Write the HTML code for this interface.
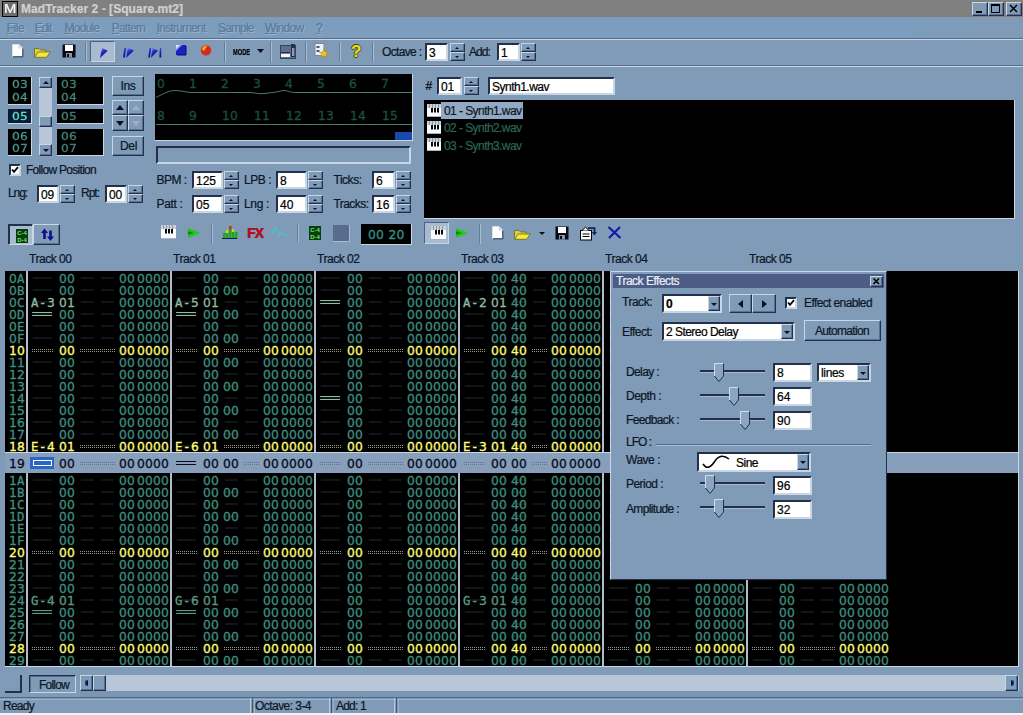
<!DOCTYPE html>
<html lang="en"><head><meta charset="utf-8"><title>MadTracker 2 - [Square.mt2]</title>
<style>
html,body{margin:0;padding:0}
body{width:1023px;height:715px;position:relative;overflow:hidden;background:#809bb7;font-family:"Liberation Sans",sans-serif}
div,svg,i,b,em,span{position:absolute;box-sizing:border-box}
svg{overflow:visible}
.t{white-space:nowrap;line-height:16px;height:16px;-webkit-text-stroke:.22px}
.t u{text-decoration:underline;text-underline-offset:1px}
.l{height:12px;line-height:12px;white-space:pre;width:1023px}
.l b,.l em{-webkit-text-stroke:.3px;font-weight:normal;font-style:normal;top:1px;height:12px;line-height:12px;font-size:12.3px}
.l b{font-family:"DejaVu Sans",sans-serif;letter-spacing:.18px}
.l.sm b{transform:scaleY(.85);transform-origin:0 55%}
.l em{font-family:"DejaVu Sans Mono",monospace;letter-spacing:.6px}
.rz{border:1px solid;border-color:#c9d6e4 #22304c #22304c #c9d6e4;background:#809bb7;box-shadow:inset -1px -1px 0 #5a7090}
.sk{border:1px solid;border-color:#22304c #c9d6e4 #c9d6e4 #22304c}
.pr{border:1px solid;border-color:#22304c #c9d6e4 #c9d6e4 #22304c;box-shadow:inset 1px 1px 0 #22304c;background:#a9bccf}
.p1{box-shadow:none;border-color:#4c6283 #c9d6e4 #c9d6e4 #4c6283}
.trk{background:#b7c7d7}
.in{background:#fff;border:2px solid;border-color:#22304c #c9d6e4 #c9d6e4 #22304c}
i.au,i.ad,i.al,i.ar{width:0;height:0;border:3px solid transparent;left:50%;top:50%}
i.au{border-width:0 2.5px 2.5px;border-bottom-color:#0a1020;margin:-1px 0 0 -2.5px}
i.ad{border-width:2.5px 2.5px 0;border-top-color:#0a1020;margin:-1px 0 0 -2.5px}
i.au.g{border-width:0 3px 3px;margin:-2px 0 0 -3px}
i.ad.g{border-width:3px 3px 0;margin:-1px 0 0 -3px}
i.au.b{border-width:0 4px 5px 4px;margin:-3px 0 0 -4px}
i.ad.b{border-width:5px 4px 0 4px;margin:-2px 0 0 -4px}
i.al{border:4px solid transparent;border-left:0;border-right:5px solid #0a1020;margin:-4px 0 0 -3px}
i.ar{border:4px solid transparent;border-right:0;border-left:5px solid #0a1020;margin:-4px 0 0 -2px}
i.al.s{border-width:3px 3px 3px 0;margin:-3px 0 0 -2px}
i.ar.s{border-width:3px 0 3px 3px;margin:-3px 0 0 -1px}
.dm{background:repeating-linear-gradient(180deg,transparent 0 5px,#111615 5px 7px,transparent 7px 12px)}
.pat{left:0;top:0;width:1023px;height:0}
.r{left:0;color:#3f8f80;width:889px;overflow:hidden}
.r.y{color:#ffff78}
.r.c{color:#060a1c}
.r i{top:4px;height:5px;background:repeating-linear-gradient(90deg,#000 0 1px,transparent 1px 2px),repeating-linear-gradient(0deg,#000 0 1px,#9a9a82 1px 2px)}
.r.c i{background-image:repeating-linear-gradient(90deg,#879fbb 0 1px,transparent 1px 2px),repeating-linear-gradient(0deg,#879fbb 0 1px,#5c7592 1px 2px)}
.q{top:4px;width:20px;height:4px;border-top:1px solid #8fbca0;border-bottom:1px solid #8fbca0}
.r.y .q{border-color:#ffff78}
.r.c .q{border-color:#060a1c}
.s{top:0;width:24px;height:12px;background:#2a66c4}
</style></head>
<body>
<div style="left:0px;top:0px;width:1023px;height:17px;background:#808080"></div>
<div style="left:2px;top:1px;width:16px;height:16px;background:#6e6e6e;border:1px solid #000"></div>
<div class="t" style="left:4px;top:1.4px;font-size:12.5px;color:#fff;transform:scaleX(1.18);transform-origin:0 50%;">M</div>
<div class="t" style="left:21px;top:1.0px;font-size:12px;color:#d0d0d0;font-weight:bold;letter-spacing:0.05px;">MadTracker 2 - [Square.mt2]</div>
<div class="rz" style="left:972px;top:2px;width:16px;height:14px;"></div>
<div class="rz" style="left:988px;top:2px;width:16px;height:14px;"></div>
<div class="rz" style="left:1006px;top:2px;width:16px;height:14px;"></div>
<svg style="left:972px;top:2px" width="16" height="14" viewBox="0 0 16 14"><rect x="4" y="9" width="6" height="2" fill="#000"/></svg>
<svg style="left:988px;top:2px" width="16" height="14" viewBox="0 0 16 14"><rect x="3.5" y="2.5" width="8" height="8" fill="none" stroke="#000"/><rect x="3" y="2" width="9" height="2" fill="#000"/></svg>
<svg style="left:1006px;top:2px" width="16" height="14" viewBox="0 0 16 14"><path d="M4 3L11 10M11 3L4 10" stroke="#000" stroke-width="1.5"/></svg>
<div style="left:0px;top:18px;width:1023px;height:20px;background:linear-gradient(90deg,#7c9dbe 0,#7c9dbe 88%,#809bb7 97%)"></div>
<div class="t" style="left:6.8px;top:20.2px;font-size:12px;color:#5d7c9e;letter-spacing:-0.53px;text-shadow:1px 1px 0 #9db3ca;"><u>F</u>ile</div>
<div class="t" style="left:34.7px;top:20.2px;font-size:12px;color:#5d7c9e;letter-spacing:-1.02px;text-shadow:1px 1px 0 #9db3ca;"><u>E</u>dit</div>
<div class="t" style="left:64.5px;top:20.2px;font-size:12px;color:#5d7c9e;letter-spacing:-0.76px;text-shadow:1px 1px 0 #9db3ca;"><u>M</u>odule</div>
<div class="t" style="left:111.8px;top:20.2px;font-size:12px;color:#5d7c9e;letter-spacing:-0.78px;text-shadow:1px 1px 0 #9db3ca;"><u>P</u>attern</div>
<div class="t" style="left:156.8px;top:20.2px;font-size:12px;color:#5d7c9e;letter-spacing:-0.80px;text-shadow:1px 1px 0 #9db3ca;"><u>I</u>nstrument</div>
<div class="t" style="left:218px;top:20.2px;font-size:12px;color:#5d7c9e;letter-spacing:-0.86px;text-shadow:1px 1px 0 #9db3ca;"><u>S</u>ample</div>
<div class="t" style="left:265px;top:20.2px;font-size:12px;color:#5d7c9e;letter-spacing:-0.70px;text-shadow:1px 1px 0 #9db3ca;"><u>W</u>indow</div>
<div class="t" style="left:316px;top:20.2px;font-size:12px;color:#5d7c9e;letter-spacing:-1.67px;text-shadow:1px 1px 0 #9db3ca;"><u>?</u></div>
<div style="left:0px;top:38px;width:1023px;height:1px;background:#566c8c"></div>
<div style="left:0px;top:39px;width:1023px;height:1px;background:#c9d6e4"></div>
<div style="left:0px;top:65px;width:1023px;height:1px;background:#566c8c"></div>
<div style="left:0px;top:66px;width:1023px;height:1px;background:#c9d6e4"></div>
<svg style="left:12px;top:44px" width="11" height="13" viewBox="0 0 11 13"><path d="M.5 .5H7L10.5 4V12.5H.5Z" fill="#fff" stroke="#e8eef5" stroke-width=".6"/><path d="M10.8 4.5V12.8H1" fill="none" stroke="#22304c" stroke-width="1"/><path d="M7 .5V4H10.5" fill="#dfe7ef" stroke="#b8c4d2" stroke-width=".6"/></svg>
<svg style="left:34px;top:47px" width="17" height="11" viewBox="0 0 17 11"><path d="M.5 10V1.5H5L6.5 3H12V5" fill="#d8cf4a" stroke="#6f6a10" stroke-width=".8"/><path d="M.8 10.3L4 5H16.3L12.5 10.3Z" fill="#f2ea3c" stroke="#6f6a10" stroke-width=".8"/></svg>
<svg style="left:62px;top:44px" width="14" height="14" viewBox="0 0 14 14"><rect x=".5" y=".5" width="13" height="13" fill="#0a0a14"/><rect x="3" y="1" width="8" height="6" fill="#fff"/><rect x="4" y="9" width="6" height="4.5" fill="#8b96a6"/><rect x="5" y="10" width="2" height="3" fill="#0a0a14"/></svg>
<div style="left:85px;top:42px;width:1px;height:20px;background:#657c9a"></div>
<div style="left:86px;top:42px;width:1px;height:20px;background:#a9bcd0"></div>
<div class="pr p1" style="left:90px;top:41px;width:25px;height:21px;"></div>
<svg style="left:0;top:0" width="0" height="0"><defs><linearGradient id="pg" x1="0" y1="0" x2=".6" y2="1"><stop offset="0" stop-color="#8f9cf0"/><stop offset=".45" stop-color="#2428c8"/><stop offset="1" stop-color="#0a0c70"/></linearGradient></defs></svg>
<svg style="left:99px;top:47px" width="10" height="12" viewBox="0 0 10 12"><path d="M3 1L8.8 3.8L1 11Z" fill="url(#pg)"/></svg>
<svg style="left:122px;top:47px" width="13" height="12" viewBox="0 0 13 12"><path d="M2.2 1H4L2.8 10.5H1Z" fill="url(#pg)"/><path d="M5.6 1L12 3.6L4.2 10.8Z" fill="url(#pg)"/></svg>
<svg style="left:147px;top:47px" width="15" height="12" viewBox="0 0 15 12"><path d="M2.4 1H4.2L3 10.5H1.2Z" fill="url(#pg)"/><path d="M5.4 1L11 3.8L4 10.8Z" fill="url(#pg)"/><path d="M12.4 1H14.2V10.5H12.4Z" fill="url(#pg)"/></svg>
<svg style="left:176px;top:45px" width="10" height="10" viewBox="0 0 10 10"><rect width="10" height="10" fill="#1a20c4"/><path d="M0 0H6L0 6Z" fill="#93a6ee"/><path d="M0 0H3.5L0 3.5Z" fill="#dfe7fb"/><path d="M10 1V10H1" fill="none" stroke="#0b0f6c" stroke-width="1"/></svg>
<svg style="left:200px;top:44px" width="12" height="12" viewBox="0 0 12 12"><circle cx="6" cy="6.2" r="5.2" fill="#d8281c"/><path d="M1.8 5.5A4.2 4.2 0 0 1 7.5 1.8L4 7Z" fill="#f2a21c"/></svg>
<div style="left:224px;top:42px;width:1px;height:20px;background:#657c9a"></div>
<div style="left:225px;top:42px;width:1px;height:20px;background:#a9bcd0"></div>
<div class="t" style="left:233px;top:43.8px;font-size:8.6px;color:#000;font-weight:bold;transform:scaleX(.66);transform-origin:0 50%;">MODE</div>
<svg style="left:257px;top:49px" width="7" height="4" viewBox="0 0 7 4"><path d="M0 0H7L3.5 4Z" fill="#0a1020"/></svg>
<div style="left:270px;top:42px;width:1px;height:20px;background:#657c9a"></div>
<div style="left:271px;top:42px;width:1px;height:20px;background:#a9bcd0"></div>
<svg style="left:280px;top:43px" width="16" height="16" viewBox="0 0 16 16"><rect x=".5" y="2.5" width="15" height="13" fill="#5d6f8b" stroke="#36455f"/><rect x="1" y="9" width="9" height="5" fill="#f4f6fa"/><rect x="1" y="9" width="9" height="1.6" fill="#22304c"/><rect x="11" y="1" width="4" height="13" fill="#22304c"/><rect x="12" y="5" width="2.4" height="8" fill="#8b9bb3"/></svg>
<div style="left:305px;top:42px;width:1px;height:20px;background:#657c9a"></div>
<div style="left:306px;top:42px;width:1px;height:20px;background:#a9bcd0"></div>
<svg style="left:314px;top:43px" width="15" height="15" viewBox="0 0 15 15"><rect x="1" y=".5" width="9" height="12" fill="#eef1f5" stroke="#7b8797"/><rect x="2.5" y="3" width="3" height="2" fill="#4a5a74"/><rect x="2.5" y="7" width="3" height="2" fill="#4a5a74"/><path d="M10 6L11.3 9L14.5 9.4L12 11.3L12.8 14.5L10 12.8L7.2 14.5L8 11.3L5.5 9.4L8.7 9Z" fill="#f0c81c" stroke="#a07c0a" stroke-width=".5"/></svg>
<div style="left:339px;top:42px;width:1px;height:20px;background:#657c9a"></div>
<div style="left:340px;top:42px;width:1px;height:20px;background:#a9bcd0"></div>
<div class="t" style="left:351px;top:43.8px;font-size:17px;color:#e8e020;font-weight:bold;letter-spacing:-0.38px;text-shadow:1px 0 0 #3a3a10,-1px 0 0 #3a3a10,0 1px 0 #3a3a10,0 -1px 0 #3a3a10;">?</div>
<div style="left:372px;top:42px;width:1px;height:20px;background:#657c9a"></div>
<div style="left:373px;top:42px;width:1px;height:20px;background:#a9bcd0"></div>
<div class="t" style="left:382px;top:43.7px;font-size:12px;color:#0c1626;letter-spacing:-0.65px;">Octave :</div>
<div class="in" style="left:425px;top:43px;width:23px;height:18px;"></div>
<div class="t" style="left:429px;top:44.7px;font-size:12px;color:#000;">3</div>
<div class="rz" style="left:450px;top:43px;width:15px;height:9px;"><i class="au"></i></div>
<div class="rz" style="left:450px;top:52px;width:15px;height:9px;"><i class="ad"></i></div>
<div class="t" style="left:469px;top:43.7px;font-size:12px;color:#0c1626;letter-spacing:-0.92px;">Add:</div>
<div class="in" style="left:497px;top:43px;width:23px;height:18px;"></div>
<div class="t" style="left:501px;top:44.7px;font-size:12px;color:#000;">1</div>
<div class="rz" style="left:521px;top:43px;width:15px;height:9px;"><i class="au"></i></div>
<div class="rz" style="left:521px;top:52px;width:15px;height:9px;"><i class="ad"></i></div>
<div style="left:8px;top:77px;width:24px;height:28px;background:#000;border-bottom:1px solid #c9d6e4;border-right:1px solid #c9d6e4"></div>
<div style="left:8px;top:109px;width:24px;height:15px;background:#000;border-bottom:1px solid #c9d6e4;border-right:1px solid #c9d6e4"></div>
<div style="left:8px;top:129px;width:24px;height:27px;background:#000;border-bottom:1px solid #c9d6e4;border-right:1px solid #c9d6e4"></div>
<div style="left:57px;top:77px;width:47px;height:28px;background:#000;border-bottom:1px solid #c9d6e4;border-right:1px solid #c9d6e4"></div>
<div style="left:57px;top:109px;width:47px;height:15px;background:#000;border-bottom:1px solid #c9d6e4;border-right:1px solid #c9d6e4"></div>
<div style="left:57px;top:129px;width:47px;height:27px;background:#000;border-bottom:1px solid #c9d6e4;border-right:1px solid #c9d6e4"></div>
<div style="left:8px;top:109px;width:23px;height:14px;background:#0a1c34"></div>
<div class="l sm" style="left:0;top:77.5px;color:#4a9484;"><b style="left:12px;">03</b></div>
<div class="l sm" style="left:0;top:90.5px;color:#4a9484;"><b style="left:12px;">04</b></div>
<div class="l sm" style="left:0;top:109.5px;color:#5ce0cc;"><b style="left:12px;">05</b></div>
<div class="l sm" style="left:0;top:129.5px;color:#4a9484;"><b style="left:12px;">06</b></div>
<div class="l sm" style="left:0;top:141.5px;color:#4a9484;"><b style="left:12px;">07</b></div>
<div class="l sm" style="left:0;top:77.5px;color:#3f8474;"><b style="left:61px;">03</b></div>
<div class="l sm" style="left:0;top:90.5px;color:#3f8474;"><b style="left:61px;">04</b></div>
<div class="l sm" style="left:0;top:109.5px;color:#3f8474;"><b style="left:61px;">05</b></div>
<div class="l sm" style="left:0;top:129.5px;color:#3f8474;"><b style="left:61px;">06</b></div>
<div class="l sm" style="left:0;top:141.5px;color:#3f8474;"><b style="left:61px;">07</b></div>
<div class="trk" style="left:39px;top:77px;width:13px;height:79px;"></div>
<div class="rz" style="left:39px;top:77px;width:13px;height:11px;"><i class="au g"></i></div>
<div class="rz" style="left:39px;top:116px;width:13px;height:11px;"></div>
<div class="rz" style="left:39px;top:144px;width:13px;height:12px;"><i class="ad g"></i></div>
<div class="rz" style="left:112px;top:76px;width:32px;height:20px;"></div>
<div class="t" style="left:120.5px;top:78.2px;font-size:12px;color:#0c1626;letter-spacing:-0.34px;">Ins</div>
<div class="rz" style="left:112px;top:136px;width:32px;height:20px;"></div>
<div class="t" style="left:120px;top:138.2px;font-size:12px;color:#0c1626;letter-spacing:-0.34px;">Del</div>
<div class="rz" style="left:112px;top:100px;width:16px;height:15px;"><i class="au b"></i></div>
<div class="rz" style="left:128px;top:100px;width:16px;height:15px;"><i class="au b" style="border-bottom-color:#9fb3c8"></i></div>
<div class="rz" style="left:112px;top:115px;width:16px;height:16px;"><i class="ad b"></i></div>
<div class="rz" style="left:128px;top:115px;width:16px;height:16px;"><i class="ad b" style="border-top-color:#9fb3c8"></i></div>
<div class="in" style="left:8.5px;top:163.5px;width:12px;height:12px;"></div>
<svg style="left:10.5px;top:165.5px" width="8" height="8" viewBox="0 0 8 8"><path d="M1 3.5L3 5.8L7 1.2" fill="none" stroke="#000" stroke-width="1.8"/></svg>
<div class="t" style="left:26px;top:162.2px;font-size:12px;color:#0c1626;letter-spacing:-0.71px;">Follow Position</div>
<div class="t" style="left:8px;top:185.2px;font-size:12px;color:#0c1626;letter-spacing:-1.09px;">Lng:</div>
<div class="in" style="left:37px;top:185px;width:22px;height:18px;"></div>
<div class="t" style="left:41px;top:186.7px;font-size:12px;color:#000;letter-spacing:-0.17px;">09</div>
<div class="rz" style="left:60px;top:185px;width:15px;height:9px;"><i class="au"></i></div>
<div class="rz" style="left:60px;top:194px;width:15px;height:9px;"><i class="ad"></i></div>
<div class="t" style="left:81px;top:185.2px;font-size:12px;color:#0c1626;letter-spacing:-1.00px;">Rpt:</div>
<div class="in" style="left:105px;top:185px;width:22px;height:18px;"></div>
<div class="t" style="left:109px;top:186.7px;font-size:12px;color:#000;letter-spacing:-0.17px;">00</div>
<div class="rz" style="left:128px;top:185px;width:15px;height:9px;"><i class="au"></i></div>
<div class="rz" style="left:128px;top:194px;width:15px;height:9px;"><i class="ad"></i></div>
<div style="left:155px;top:74px;width:258px;height:67px;background:#000;border-right:1px solid #c9d6e4;border-bottom:1px solid #c9d6e4"></div>
<div class="l" style="left:0;top:77px;color:#1b4e42;"><b style="left:157px;">0</b></div>
<div class="l" style="left:0;top:108.5px;color:#1b4e42;"><b style="left:157px;">8</b></div>
<div class="l" style="left:0;top:77px;color:#1b4e42;"><b style="left:189px;">1</b></div>
<div class="l" style="left:0;top:108.5px;color:#1b4e42;"><b style="left:189px;">9</b></div>
<div class="l" style="left:0;top:77px;color:#1b4e42;"><b style="left:221px;">2</b></div>
<div class="l" style="left:0;top:108.5px;color:#1b4e42;"><b style="left:222px;">10</b></div>
<div class="l" style="left:0;top:77px;color:#1b4e42;"><b style="left:253px;">3</b></div>
<div class="l" style="left:0;top:108.5px;color:#1b4e42;"><b style="left:254px;">11</b></div>
<div class="l" style="left:0;top:77px;color:#1b4e42;"><b style="left:285px;">4</b></div>
<div class="l" style="left:0;top:108.5px;color:#1b4e42;"><b style="left:286px;">12</b></div>
<div class="l" style="left:0;top:77px;color:#1b4e42;"><b style="left:317px;">5</b></div>
<div class="l" style="left:0;top:108.5px;color:#1b4e42;"><b style="left:318px;">13</b></div>
<div class="l" style="left:0;top:77px;color:#1b4e42;"><b style="left:349px;">6</b></div>
<div class="l" style="left:0;top:108.5px;color:#1b4e42;"><b style="left:350px;">14</b></div>
<div class="l" style="left:0;top:77px;color:#1b4e42;"><b style="left:381px;">7</b></div>
<div class="l" style="left:0;top:108.5px;color:#1b4e42;"><b style="left:382px;">15</b></div>
<svg style="left:155px;top:74px" width="257" height="66" viewBox="0 0 257 66"><path d="M1 23.5C8 20 14 16.5 20 16.5S30 18 36 18.5H95C100 18.5 104 20.5 110 19.5S120 18.5 126 17S134 18.5 140 18.5H257" fill="none" stroke="#477c6a" stroke-width="1"/><path d="M1 50.5H257" stroke="#477c6a" stroke-width="1"/><rect x="240" y="58" width="17" height="8" fill="#1848b0"/></svg>
<div style="left:156px;top:146px;width:255px;height:18px;border:2px solid;border-color:#22304c #c9d6e4 #c9d6e4 #22304c"></div>
<div class="t" style="left:156.5px;top:171.7px;font-size:12px;color:#0c1626;letter-spacing:-0.53px;">BPM :</div>
<div class="in" style="left:192px;top:171px;width:31px;height:18px;"></div>
<div class="t" style="left:196px;top:172.7px;font-size:12px;color:#000;">125</div>
<div class="rz" style="left:224px;top:171px;width:15px;height:9px;"><i class="au"></i></div>
<div class="rz" style="left:224px;top:180px;width:15px;height:9px;"><i class="ad"></i></div>
<div class="t" style="left:244px;top:171.7px;font-size:12px;color:#0c1626;letter-spacing:-0.47px;">LPB :</div>
<div class="in" style="left:276px;top:171px;width:31px;height:18px;"></div>
<div class="t" style="left:280px;top:172.7px;font-size:12px;color:#000;">8</div>
<div class="rz" style="left:308px;top:171px;width:15px;height:9px;"><i class="au"></i></div>
<div class="rz" style="left:308px;top:180px;width:15px;height:9px;"><i class="ad"></i></div>
<div class="t" style="left:333.5px;top:171.7px;font-size:12px;color:#0c1626;letter-spacing:-0.48px;">Ticks:</div>
<div class="in" style="left:372px;top:171px;width:23px;height:18px;"></div>
<div class="t" style="left:376px;top:172.7px;font-size:12px;color:#000;">6</div>
<div class="rz" style="left:396px;top:171px;width:15px;height:9px;"><i class="au"></i></div>
<div class="rz" style="left:396px;top:180px;width:15px;height:9px;"><i class="ad"></i></div>
<div class="t" style="left:156.5px;top:195.7px;font-size:12px;color:#0c1626;letter-spacing:-0.34px;">Patt :</div>
<div class="in" style="left:192px;top:195px;width:31px;height:18px;"></div>
<div class="t" style="left:196px;top:196.7px;font-size:12px;color:#000;">05</div>
<div class="rz" style="left:224px;top:195px;width:15px;height:9px;"><i class="au"></i></div>
<div class="rz" style="left:224px;top:204px;width:15px;height:9px;"><i class="ad"></i></div>
<div class="t" style="left:244px;top:195.7px;font-size:12px;color:#0c1626;letter-spacing:-0.34px;">Lng :</div>
<div class="in" style="left:276px;top:195px;width:31px;height:18px;"></div>
<div class="t" style="left:280px;top:196.7px;font-size:12px;color:#000;">40</div>
<div class="rz" style="left:308px;top:195px;width:15px;height:9px;"><i class="au"></i></div>
<div class="rz" style="left:308px;top:204px;width:15px;height:9px;"><i class="ad"></i></div>
<div class="t" style="left:333.5px;top:195.7px;font-size:12px;color:#0c1626;letter-spacing:-0.56px;">Tracks:</div>
<div class="in" style="left:372px;top:195px;width:23px;height:18px;"></div>
<div class="t" style="left:376px;top:196.7px;font-size:12px;color:#000;">16</div>
<div class="rz" style="left:396px;top:195px;width:15px;height:9px;"><i class="au"></i></div>
<div class="rz" style="left:396px;top:204px;width:15px;height:9px;"><i class="ad"></i></div>
<div class="t" style="left:425.5px;top:78.2px;font-size:12px;color:#000;letter-spacing:0.33px;">#</div>
<div class="in" style="left:437px;top:77px;width:25px;height:18px;"></div>
<div class="t" style="left:441px;top:78.7px;font-size:12px;color:#000;letter-spacing:-0.17px;">01</div>
<div class="rz" style="left:464px;top:77px;width:15px;height:9px;"><i class="au"></i></div>
<div class="rz" style="left:464px;top:86px;width:15px;height:9px;"><i class="ad"></i></div>
<div class="in" style="left:488px;top:77px;width:127px;height:18px;"></div>
<div class="t" style="left:492px;top:78.7px;font-size:12px;color:#000;letter-spacing:-0.50px;">Synth1.wav</div>
<div style="left:424px;top:100px;width:591px;height:119px;background:#000;border-right:1px solid #c9d6e4;border-bottom:1px solid #c9d6e4"></div>
<div style="left:441px;top:102px;width:82px;height:17px;background:#93a8c2"></div>
<svg style="left:427px;top:104px" width="14" height="13" viewBox="0 0 14 13"><rect width="14" height="13" fill="#fbfcfd"/><rect width="14" height="4" fill="#c9cfd8"/><path d="M2.5 0V4M5.5 0V4M8.5 0V4M11.5 0V4" stroke="#8e99a8" stroke-width="1"/><rect x="4" y="4" width="2" height="4.5" fill="#0a0a0a"/><rect x="7" y="4" width="2" height="4.5" fill="#0a0a0a"/><rect x="10" y="4" width="2" height="4.5" fill="#0a0a0a"/><path d="M0 12.5H14" stroke="#a9b4c2"/></svg>
<div class="t" style="left:444px;top:102.7px;font-size:12px;color:#0c1626;letter-spacing:-0.57px;">01 - Synth1.wav</div>
<svg style="left:427px;top:121px" width="14" height="13" viewBox="0 0 14 13"><rect width="14" height="13" fill="#fbfcfd"/><rect width="14" height="4" fill="#c9cfd8"/><path d="M2.5 0V4M5.5 0V4M8.5 0V4M11.5 0V4" stroke="#8e99a8" stroke-width="1"/><rect x="4" y="4" width="2" height="4.5" fill="#0a0a0a"/><rect x="7" y="4" width="2" height="4.5" fill="#0a0a0a"/><rect x="10" y="4" width="2" height="4.5" fill="#0a0a0a"/><path d="M0 12.5H14" stroke="#a9b4c2"/></svg>
<div class="t" style="left:444px;top:120.2px;font-size:12px;color:#2b6454;letter-spacing:-0.57px;">02 - Synth2.wav</div>
<svg style="left:427px;top:138px" width="14" height="13" viewBox="0 0 14 13"><rect width="14" height="13" fill="#fbfcfd"/><rect width="14" height="4" fill="#c9cfd8"/><path d="M2.5 0V4M5.5 0V4M8.5 0V4M11.5 0V4" stroke="#8e99a8" stroke-width="1"/><rect x="4" y="4" width="2" height="4.5" fill="#0a0a0a"/><rect x="7" y="4" width="2" height="4.5" fill="#0a0a0a"/><rect x="10" y="4" width="2" height="4.5" fill="#0a0a0a"/><path d="M0 12.5H14" stroke="#a9b4c2"/></svg>
<div class="t" style="left:444px;top:137.7px;font-size:12px;color:#2b6454;letter-spacing:-0.57px;">03 - Synth3.wav</div>
<div class="pr" style="left:8px;top:224px;width:25px;height:21px;"></div>
<svg style="left:16px;top:229px" width="12" height="14" viewBox="0 0 12 14"><rect width="12" height="14" fill="#0d3a12"/><text x="6" y="6" font-family="Liberation Sans,sans-serif" font-size="6" font-weight="bold" fill="#5ff05a" text-anchor="middle">C-4</text><text x="6" y="12.5" font-family="Liberation Sans,sans-serif" font-size="6" font-weight="bold" fill="#5ff05a" text-anchor="middle">D-4</text></svg>
<div class="rz" style="left:33px;top:224px;width:27px;height:21px;"></div>
<svg style="left:41px;top:228px" width="13" height="13" viewBox="0 0 13 13"><path d="M0 5L3.5 .5L7 5H4.8V11H2.2V5Z" fill="#10108a"/><path d="M6 8.5L9.5 13L13 8.5H10.8V2.5H8.2V8.5Z" fill="#10108a"/></svg>
<svg style="left:161px;top:225px" width="15" height="14" viewBox="0 0 15 14"><rect width="15" height="14" fill="#fbfcfd"/><rect width="15" height="4" fill="#c9cfd8"/><path d="M2.5 0V4M5.5 0V4M8.5 0V4M11.5 0V4" stroke="#8e99a8" stroke-width="1"/><rect x="4" y="4" width="2" height="4.5" fill="#0a0a0a"/><rect x="7" y="4" width="2" height="4.5" fill="#0a0a0a"/><rect x="10" y="4" width="2" height="4.5" fill="#0a0a0a"/><path d="M0 13.5H15" stroke="#a9b4c2"/></svg>
<svg style="left:188px;top:228px" width="13" height="10" viewBox="0 0 13 10"><path d="M0 0L12.5 5L0 10Z" fill="#22c81e"/><path d="M0 3L6 5L0 7Z" fill="#128a10"/></svg>
<div style="left:211px;top:224px;width:1px;height:20px;background:#657c9a"></div>
<div style="left:212px;top:224px;width:1px;height:20px;background:#a9bcd0"></div>
<svg style="left:222px;top:225px" width="15" height="14" viewBox="0 0 15 14"><rect x="1" y="8" width="2.4" height="6" fill="#1da81a"/><rect x="1" y="8" width="2.4" height="3" fill="#1da81a"/><rect x="4" y="5" width="2.4" height="9" fill="#1da81a"/><rect x="4" y="5" width="2.4" height="3" fill="#d8d01c"/><rect x="7" y="1" width="2.4" height="13" fill="#1da81a"/><rect x="7" y="1" width="2.4" height="3" fill="#e02818"/><rect x="10" y="4" width="2.4" height="10" fill="#1da81a"/><rect x="10" y="4" width="2.4" height="3" fill="#d8d01c"/><rect x="13" y="7" width="2.4" height="7" fill="#1da81a"/><rect x="13" y="7" width="2.4" height="3" fill="#1da81a"/><path d="M0 13.5H15" stroke="#0a1a6c"/></svg>
<div class="t" style="left:247px;top:225.3px;font-size:14px;color:#b01020;font-weight:bold;letter-spacing:-0.69px;letter-spacing:-1px;text-shadow:.5px 0 0 #b01020;">FX</div>
<svg style="left:272px;top:225px" width="16" height="14" viewBox="0 0 16 14"><path d="M.5 9L3.5 1.5L7 11L9 6.5L11 10.5L13.5 9L15.5 11.5" fill="none" stroke="#4ec0c8" stroke-width="1.3"/></svg>
<div style="left:297px;top:224px;width:1px;height:18px;background:#657c9a"></div>
<div style="left:298px;top:224px;width:1px;height:18px;background:#a9bcd0"></div>
<svg style="left:309px;top:226px" width="12" height="14" viewBox="0 0 12 14"><rect width="12" height="14" fill="#0d3a12"/><text x="6" y="6" font-family="Liberation Sans,sans-serif" font-size="6" font-weight="bold" fill="#5ff05a" text-anchor="middle">C-4</text><text x="6" y="12.5" font-family="Liberation Sans,sans-serif" font-size="6" font-weight="bold" fill="#5ff05a" text-anchor="middle">D-4</text></svg>
<div style="left:333px;top:225px;width:17px;height:17px;background:#586c8e;border-right:1px solid #a9bbd0;border-bottom:1px solid #a9bbd0"></div>
<div style="left:361px;top:224px;width:51px;height:21px;background:#000;border-right:1px solid #c9d6e4;border-bottom:1px solid #c9d6e4"></div>
<div class="l" style="left:0;top:227.5px;color:#3a9088;"><b style="left:368px;">00</b></div>
<div class="l" style="left:0;top:227.5px;color:#3a9088;"><b style="left:388.5px;">20</b></div>
<div class="pr p1" style="left:424px;top:222px;width:25px;height:22px;"></div>
<svg style="left:431px;top:226px" width="15" height="14" viewBox="0 0 15 14"><rect width="15" height="14" fill="#fbfcfd"/><rect width="15" height="4" fill="#c9cfd8"/><path d="M2.5 0V4M5.5 0V4M8.5 0V4M11.5 0V4" stroke="#8e99a8" stroke-width="1"/><rect x="4" y="4" width="2" height="4.5" fill="#0a0a0a"/><rect x="7" y="4" width="2" height="4.5" fill="#0a0a0a"/><rect x="10" y="4" width="2" height="4.5" fill="#0a0a0a"/><path d="M0 13.5H15" stroke="#a9b4c2"/></svg>
<svg style="left:456px;top:228px" width="13" height="10" viewBox="0 0 13 10"><path d="M0 0L12.5 5L0 10Z" fill="#22c81e"/><path d="M0 3L6 5L0 7Z" fill="#128a10"/></svg>
<div style="left:479px;top:224px;width:1px;height:20px;background:#657c9a"></div>
<div style="left:480px;top:224px;width:1px;height:20px;background:#a9bcd0"></div>
<svg style="left:492px;top:226px" width="11" height="13" viewBox="0 0 11 13"><path d="M.5 .5H7L10.5 4V12.5H.5Z" fill="#fff" stroke="#e8eef5" stroke-width=".6"/><path d="M10.8 4.5V12.8H1" fill="none" stroke="#22304c" stroke-width="1"/><path d="M7 .5V4H10.5" fill="#dfe7ef" stroke="#b8c4d2" stroke-width=".6"/></svg>
<svg style="left:514px;top:229px" width="17" height="11" viewBox="0 0 17 11"><path d="M.5 10V1.5H5L6.5 3H12V5" fill="#d8cf4a" stroke="#6f6a10" stroke-width=".8"/><path d="M.8 10.3L4 5H16.3L12.5 10.3Z" fill="#f2ea3c" stroke="#6f6a10" stroke-width=".8"/></svg>
<svg style="left:539px;top:232px" width="6" height="3" viewBox="0 0 6 3"><path d="M0 0H6L3 3Z" fill="#0a1020"/></svg>
<svg style="left:555px;top:226px" width="14" height="14" viewBox="0 0 14 14"><rect x=".5" y=".5" width="13" height="13" fill="#0a0a14"/><rect x="3" y="1" width="8" height="6" fill="#fff"/><rect x="4" y="9" width="6" height="4.5" fill="#8b96a6"/><rect x="5" y="10" width="2" height="3" fill="#0a0a14"/></svg>
<svg style="left:579px;top:226px" width="18" height="15" viewBox="0 0 18 15"><rect x="1.5" y="4.5" width="11" height="9.5" fill="#f8fafc" stroke="#000"/><path d="M3.5 8H10.5M3.5 10.5H10.5" stroke="#000" stroke-width="1.2"/><path d="M3 4.5L6.5 1.2L10 4.5" fill="#f8fafc" stroke="#000" stroke-width="1"/><path d="M9 2.2H15.5V7.5" fill="none" stroke="#16245c" stroke-width="1.8"/><path d="M12.8 6L15.5 9.5L18 6Z" fill="#16245c"/></svg>
<svg style="left:607px;top:226px" width="15" height="13" viewBox="0 0 15 13"><path d="M1.5 1L13.5 12M13 1L2 12" stroke="#1218a8" stroke-width="2.2"/></svg>
<div class="t" style="left:29px;top:250.8px;font-size:12px;color:#0c1626;letter-spacing:-0.47px;">Track 00</div>
<div class="t" style="left:173px;top:250.8px;font-size:12px;color:#0c1626;letter-spacing:-0.47px;">Track 01</div>
<div class="t" style="left:317px;top:250.8px;font-size:12px;color:#0c1626;letter-spacing:-0.47px;">Track 02</div>
<div class="t" style="left:461px;top:250.8px;font-size:12px;color:#0c1626;letter-spacing:-0.47px;">Track 03</div>
<div class="t" style="left:605px;top:250.8px;font-size:12px;color:#0c1626;letter-spacing:-0.47px;">Track 04</div>
<div class="t" style="left:749px;top:250.8px;font-size:12px;color:#0c1626;letter-spacing:-0.47px;">Track 05</div>
<div style="left:5px;top:271px;width:1013px;height:181px;background:#000"></div>
<div style="left:5px;top:473px;width:1013px;height:193px;background:#000"></div>
<div style="left:5px;top:452px;width:1014px;height:21px;background:#879fbb"></div>
<div style="left:5px;top:452px;width:1014px;height:1px;background:#c9d6e4"></div>
<div style="left:5px;top:666px;width:1014px;height:1px;background:#c9d6e4"></div>
<div style="left:1018px;top:271px;width:1px;height:396px;background:#c9d6e4"></div>
<div style="left:26px;top:271px;width:2px;height:181px;background:#aebccb"></div>
<div style="left:26px;top:473px;width:2px;height:193px;background:#aebccb"></div>
<div style="left:170px;top:271px;width:2px;height:181px;background:#aebccb"></div>
<div style="left:170px;top:473px;width:2px;height:193px;background:#aebccb"></div>
<div style="left:314px;top:271px;width:2px;height:181px;background:#aebccb"></div>
<div style="left:314px;top:473px;width:2px;height:193px;background:#aebccb"></div>
<div style="left:458px;top:271px;width:2px;height:181px;background:#aebccb"></div>
<div style="left:458px;top:473px;width:2px;height:193px;background:#aebccb"></div>
<div style="left:602px;top:271px;width:2px;height:181px;background:#aebccb"></div>
<div style="left:602px;top:473px;width:2px;height:193px;background:#aebccb"></div>
<div style="left:746px;top:271px;width:2px;height:181px;background:#aebccb"></div>
<div style="left:746px;top:473px;width:2px;height:193px;background:#aebccb"></div>
<div class="dm" style="left:33px;top:272px;width:19px;height:180px;"></div>
<div class="dm" style="left:81px;top:272px;width:13px;height:180px;"></div>
<div class="dm" style="left:101px;top:272px;width:13px;height:180px;"></div>
<div class="dm" style="left:33px;top:474px;width:19px;height:192px;"></div>
<div class="dm" style="left:81px;top:474px;width:13px;height:192px;"></div>
<div class="dm" style="left:101px;top:474px;width:13px;height:192px;"></div>
<div class="dm" style="left:177px;top:272px;width:19px;height:180px;"></div>
<div class="dm" style="left:225px;top:272px;width:13px;height:180px;"></div>
<div class="dm" style="left:245px;top:272px;width:13px;height:180px;"></div>
<div class="dm" style="left:177px;top:474px;width:19px;height:192px;"></div>
<div class="dm" style="left:225px;top:474px;width:13px;height:192px;"></div>
<div class="dm" style="left:245px;top:474px;width:13px;height:192px;"></div>
<div class="dm" style="left:321px;top:272px;width:19px;height:180px;"></div>
<div class="dm" style="left:369px;top:272px;width:13px;height:180px;"></div>
<div class="dm" style="left:389px;top:272px;width:13px;height:180px;"></div>
<div class="dm" style="left:321px;top:474px;width:19px;height:192px;"></div>
<div class="dm" style="left:369px;top:474px;width:13px;height:192px;"></div>
<div class="dm" style="left:389px;top:474px;width:13px;height:192px;"></div>
<div class="dm" style="left:465px;top:272px;width:19px;height:180px;"></div>
<div class="dm" style="left:513px;top:272px;width:13px;height:180px;"></div>
<div class="dm" style="left:533px;top:272px;width:13px;height:180px;"></div>
<div class="dm" style="left:465px;top:474px;width:19px;height:192px;"></div>
<div class="dm" style="left:513px;top:474px;width:13px;height:192px;"></div>
<div class="dm" style="left:533px;top:474px;width:13px;height:192px;"></div>
<div class="dm" style="left:609px;top:272px;width:19px;height:180px;"></div>
<div class="dm" style="left:657px;top:272px;width:13px;height:180px;"></div>
<div class="dm" style="left:677px;top:272px;width:13px;height:180px;"></div>
<div class="dm" style="left:609px;top:474px;width:19px;height:192px;"></div>
<div class="dm" style="left:657px;top:474px;width:13px;height:192px;"></div>
<div class="dm" style="left:677px;top:474px;width:13px;height:192px;"></div>
<div class="dm" style="left:753px;top:272px;width:19px;height:180px;"></div>
<div class="dm" style="left:801px;top:272px;width:13px;height:180px;"></div>
<div class="dm" style="left:821px;top:272px;width:13px;height:180px;"></div>
<div class="dm" style="left:753px;top:474px;width:19px;height:192px;"></div>
<div class="dm" style="left:801px;top:474px;width:13px;height:192px;"></div>
<div class="dm" style="left:821px;top:474px;width:13px;height:192px;"></div>
<div class="pat">
<div class="r l" style="top:272px"><b style="left:9px;">0</b><em style="left:17px;">A</em><b style="left:59px;">00</b><b style="left:119px;">00</b><b style="left:137px;">0000</b><b style="left:203px;">00</b><b style="left:263px;">00</b><b style="left:281px;">0000</b><b style="left:347px;">00</b><b style="left:407px;">00</b><b style="left:425px;">0000</b><b style="left:491px;">00</b><b style="left:511px;">40</b><b style="left:551px;">00</b><b style="left:569px;">0000</b></div>
<div class="r l" style="top:284px"><b style="left:9px;">0</b><em style="left:17px;">B</em><b style="left:59px;">00</b><b style="left:119px;">00</b><b style="left:137px;">0000</b><b style="left:203px;">00</b><b style="left:223px;">00</b><b style="left:263px;">00</b><b style="left:281px;">0000</b><b style="left:347px;">00</b><b style="left:407px;">00</b><b style="left:425px;">0000</b><b style="left:491px;">00</b><b style="left:511px;">00</b><b style="left:551px;">00</b><b style="left:569px;">0000</b></div>
<div class="r l" style="top:296px"><b style="left:9px;">0</b><em style="left:17px;">C</em><em style="left:31px;color:#8fbca0">A-</em><b style="left:47px;color:#8fbca0">3</b><b style="left:59px;color:#8fbca0">01</b><b style="left:119px;">00</b><b style="left:137px;">0000</b><em style="left:175px;color:#8fbca0">A-</em><b style="left:191px;color:#8fbca0">5</b><b style="left:203px;color:#8fbca0">01</b><b style="left:263px;">00</b><b style="left:281px;">0000</b><span class="q" style="left:320px"></span><b style="left:347px;">00</b><b style="left:407px;">00</b><b style="left:425px;">0000</b><em style="left:463px;color:#8fbca0">A-</em><b style="left:479px;color:#8fbca0">2</b><b style="left:491px;color:#8fbca0">01</b><b style="left:511px;">40</b><b style="left:551px;">00</b><b style="left:569px;">0000</b></div>
<div class="r l" style="top:308px"><b style="left:9px;">0</b><em style="left:17px;">D</em><span class="q" style="left:32px"></span><b style="left:59px;">00</b><b style="left:119px;">00</b><b style="left:137px;">0000</b><span class="q" style="left:176px"></span><b style="left:203px;">00</b><b style="left:223px;">00</b><b style="left:263px;">00</b><b style="left:281px;">0000</b><b style="left:347px;">00</b><b style="left:407px;">00</b><b style="left:425px;">0000</b><b style="left:491px;">00</b><b style="left:511px;">40</b><b style="left:551px;">00</b><b style="left:569px;">0000</b></div>
<div class="r l" style="top:320px"><b style="left:9px;">0</b><em style="left:17px;">E</em><b style="left:59px;">00</b><b style="left:119px;">00</b><b style="left:137px;">0000</b><b style="left:203px;">00</b><b style="left:263px;">00</b><b style="left:281px;">0000</b><b style="left:347px;">00</b><b style="left:407px;">00</b><b style="left:425px;">0000</b><b style="left:491px;">00</b><b style="left:511px;">40</b><b style="left:551px;">00</b><b style="left:569px;">0000</b></div>
<div class="r l" style="top:332px"><b style="left:9px;">0</b><em style="left:17px;">F</em><b style="left:59px;">00</b><b style="left:119px;">00</b><b style="left:137px;">0000</b><b style="left:203px;">00</b><b style="left:223px;">00</b><b style="left:263px;">00</b><b style="left:281px;">0000</b><b style="left:347px;">00</b><b style="left:407px;">00</b><b style="left:425px;">0000</b><b style="left:491px;">00</b><b style="left:511px;">00</b><b style="left:551px;">00</b><b style="left:569px;">0000</b></div>
<div class="r l y" style="top:344px"><b style="left:9px;">10</b><i style="left:31px;width:23px"></i><b style="left:59px;">00</b><i style="left:79px;width:36px"></i><b style="left:119px;">00</b><b style="left:137px;">0000</b><i style="left:175px;width:23px"></i><b style="left:203px;">00</b><i style="left:223px;width:36px"></i><b style="left:263px;">00</b><b style="left:281px;">0000</b><i style="left:319px;width:23px"></i><b style="left:347px;">00</b><i style="left:367px;width:36px"></i><b style="left:407px;">00</b><b style="left:425px;">0000</b><i style="left:463px;width:23px"></i><b style="left:491px;">00</b><b style="left:511px;">40</b><i style="left:531px;width:16px"></i><b style="left:551px;">00</b><b style="left:569px;">0000</b></div>
<div class="r l" style="top:356px"><b style="left:9px;">11</b><b style="left:59px;">00</b><b style="left:119px;">00</b><b style="left:137px;">0000</b><b style="left:203px;">00</b><b style="left:223px;">00</b><b style="left:263px;">00</b><b style="left:281px;">0000</b><b style="left:347px;">00</b><b style="left:407px;">00</b><b style="left:425px;">0000</b><b style="left:491px;">00</b><b style="left:511px;">00</b><b style="left:551px;">00</b><b style="left:569px;">0000</b></div>
<div class="r l" style="top:368px"><b style="left:9px;">12</b><b style="left:59px;">00</b><b style="left:119px;">00</b><b style="left:137px;">0000</b><b style="left:203px;">00</b><b style="left:263px;">00</b><b style="left:281px;">0000</b><b style="left:347px;">00</b><b style="left:407px;">00</b><b style="left:425px;">0000</b><b style="left:491px;">00</b><b style="left:511px;">40</b><b style="left:551px;">00</b><b style="left:569px;">0000</b></div>
<div class="r l" style="top:380px"><b style="left:9px;">13</b><b style="left:59px;">00</b><b style="left:119px;">00</b><b style="left:137px;">0000</b><b style="left:203px;">00</b><b style="left:223px;">00</b><b style="left:263px;">00</b><b style="left:281px;">0000</b><b style="left:347px;">00</b><b style="left:407px;">00</b><b style="left:425px;">0000</b><b style="left:491px;">00</b><b style="left:511px;">00</b><b style="left:551px;">00</b><b style="left:569px;">0000</b></div>
<div class="r l" style="top:392px"><b style="left:9px;">14</b><b style="left:59px;">00</b><b style="left:119px;">00</b><b style="left:137px;">0000</b><b style="left:203px;">00</b><b style="left:263px;">00</b><b style="left:281px;">0000</b><span class="q" style="left:320px"></span><b style="left:347px;">00</b><b style="left:407px;">00</b><b style="left:425px;">0000</b><b style="left:491px;">00</b><b style="left:511px;">40</b><b style="left:551px;">00</b><b style="left:569px;">0000</b></div>
<div class="r l" style="top:404px"><b style="left:9px;">15</b><b style="left:59px;">00</b><b style="left:119px;">00</b><b style="left:137px;">0000</b><b style="left:203px;">00</b><b style="left:223px;">00</b><b style="left:263px;">00</b><b style="left:281px;">0000</b><b style="left:347px;">00</b><b style="left:407px;">00</b><b style="left:425px;">0000</b><b style="left:491px;">00</b><b style="left:511px;">40</b><b style="left:551px;">00</b><b style="left:569px;">0000</b></div>
<div class="r l" style="top:416px"><b style="left:9px;">16</b><b style="left:59px;">00</b><b style="left:119px;">00</b><b style="left:137px;">0000</b><b style="left:203px;">00</b><b style="left:263px;">00</b><b style="left:281px;">0000</b><b style="left:347px;">00</b><b style="left:407px;">00</b><b style="left:425px;">0000</b><b style="left:491px;">00</b><b style="left:511px;">40</b><b style="left:551px;">00</b><b style="left:569px;">0000</b></div>
<div class="r l" style="top:428px"><b style="left:9px;">17</b><b style="left:59px;">00</b><b style="left:119px;">00</b><b style="left:137px;">0000</b><b style="left:203px;">00</b><b style="left:223px;">00</b><b style="left:263px;">00</b><b style="left:281px;">0000</b><b style="left:347px;">00</b><b style="left:407px;">00</b><b style="left:425px;">0000</b><b style="left:491px;">00</b><b style="left:511px;">00</b><b style="left:551px;">00</b><b style="left:569px;">0000</b></div>
<div class="r l y" style="top:440px"><b style="left:9px;">18</b><em style="left:31px;color:inherit">E-</em><b style="left:47px;color:inherit">4</b><b style="left:59px;">01</b><i style="left:79px;width:36px"></i><b style="left:119px;">00</b><b style="left:137px;">0000</b><em style="left:175px;color:inherit">E-</em><b style="left:191px;color:inherit">6</b><b style="left:203px;">01</b><i style="left:223px;width:36px"></i><b style="left:263px;">00</b><b style="left:281px;">0000</b><i style="left:319px;width:23px"></i><b style="left:347px;">00</b><i style="left:367px;width:36px"></i><b style="left:407px;">00</b><b style="left:425px;">0000</b><em style="left:463px;color:inherit">E-</em><b style="left:479px;color:inherit">3</b><b style="left:491px;">01</b><b style="left:511px;">40</b><i style="left:531px;width:16px"></i><b style="left:551px;">00</b><b style="left:569px;">0000</b></div>
<div class="r l c" style="top:457px"><b style="left:9px;">19</b><span class="s" style="left:30px"></span><span class="q" style="left:33px;width:19px;top:3px;height:6px;border:1px solid #fff"></span><b style="left:59px;">00</b><i style="left:79px;width:36px"></i><b style="left:119px;">00</b><b style="left:137px;">0000</b><span class="q" style="left:176px"></span><b style="left:203px;">00</b><b style="left:223px;">00</b><i style="left:243px;width:16px"></i><b style="left:263px;">00</b><b style="left:281px;">0000</b><i style="left:319px;width:23px"></i><b style="left:347px;">00</b><i style="left:367px;width:36px"></i><b style="left:407px;">00</b><b style="left:425px;">0000</b><i style="left:463px;width:23px"></i><b style="left:491px;">00</b><b style="left:511px;">00</b><i style="left:531px;width:16px"></i><b style="left:551px;">00</b><b style="left:569px;">0000</b></div>
<div class="r l" style="top:474px"><b style="left:9px;">1</b><em style="left:17px;">A</em><b style="left:59px;">00</b><b style="left:119px;">00</b><b style="left:137px;">0000</b><b style="left:203px;">00</b><b style="left:263px;">00</b><b style="left:281px;">0000</b><b style="left:347px;">00</b><b style="left:407px;">00</b><b style="left:425px;">0000</b><b style="left:491px;">00</b><b style="left:511px;">40</b><b style="left:551px;">00</b><b style="left:569px;">0000</b></div>
<div class="r l" style="top:486px"><b style="left:9px;">1</b><em style="left:17px;">B</em><b style="left:59px;">00</b><b style="left:119px;">00</b><b style="left:137px;">0000</b><b style="left:203px;">00</b><b style="left:223px;">00</b><b style="left:263px;">00</b><b style="left:281px;">0000</b><b style="left:347px;">00</b><b style="left:407px;">00</b><b style="left:425px;">0000</b><b style="left:491px;">00</b><b style="left:511px;">00</b><b style="left:551px;">00</b><b style="left:569px;">0000</b></div>
<div class="r l" style="top:498px"><b style="left:9px;">1</b><em style="left:17px;">C</em><b style="left:59px;">00</b><b style="left:119px;">00</b><b style="left:137px;">0000</b><b style="left:203px;">00</b><b style="left:263px;">00</b><b style="left:281px;">0000</b><b style="left:347px;">00</b><b style="left:407px;">00</b><b style="left:425px;">0000</b><b style="left:491px;">00</b><b style="left:511px;">40</b><b style="left:551px;">00</b><b style="left:569px;">0000</b></div>
<div class="r l" style="top:510px"><b style="left:9px;">1</b><em style="left:17px;">D</em><b style="left:59px;">00</b><b style="left:119px;">00</b><b style="left:137px;">0000</b><b style="left:203px;">00</b><b style="left:223px;">00</b><b style="left:263px;">00</b><b style="left:281px;">0000</b><b style="left:347px;">00</b><b style="left:407px;">00</b><b style="left:425px;">0000</b><b style="left:491px;">00</b><b style="left:511px;">40</b><b style="left:551px;">00</b><b style="left:569px;">0000</b></div>
<div class="r l" style="top:522px"><b style="left:9px;">1</b><em style="left:17px;">E</em><b style="left:59px;">00</b><b style="left:119px;">00</b><b style="left:137px;">0000</b><b style="left:203px;">00</b><b style="left:263px;">00</b><b style="left:281px;">0000</b><b style="left:347px;">00</b><b style="left:407px;">00</b><b style="left:425px;">0000</b><b style="left:491px;">00</b><b style="left:511px;">40</b><b style="left:551px;">00</b><b style="left:569px;">0000</b></div>
<div class="r l" style="top:534px"><b style="left:9px;">1</b><em style="left:17px;">F</em><b style="left:59px;">00</b><b style="left:119px;">00</b><b style="left:137px;">0000</b><b style="left:203px;">00</b><b style="left:223px;">00</b><b style="left:263px;">00</b><b style="left:281px;">0000</b><b style="left:347px;">00</b><b style="left:407px;">00</b><b style="left:425px;">0000</b><b style="left:491px;">00</b><b style="left:511px;">00</b><b style="left:551px;">00</b><b style="left:569px;">0000</b></div>
<div class="r l y" style="top:546px"><b style="left:9px;">20</b><i style="left:31px;width:23px"></i><b style="left:59px;">00</b><i style="left:79px;width:36px"></i><b style="left:119px;">00</b><b style="left:137px;">0000</b><i style="left:175px;width:23px"></i><b style="left:203px;">00</b><i style="left:223px;width:36px"></i><b style="left:263px;">00</b><b style="left:281px;">0000</b><i style="left:319px;width:23px"></i><b style="left:347px;">00</b><i style="left:367px;width:36px"></i><b style="left:407px;">00</b><b style="left:425px;">0000</b><i style="left:463px;width:23px"></i><b style="left:491px;">00</b><b style="left:511px;">40</b><i style="left:531px;width:16px"></i><b style="left:551px;">00</b><b style="left:569px;">0000</b></div>
<div class="r l" style="top:558px"><b style="left:9px;">21</b><b style="left:59px;">00</b><b style="left:119px;">00</b><b style="left:137px;">0000</b><b style="left:203px;">00</b><b style="left:223px;">00</b><b style="left:263px;">00</b><b style="left:281px;">0000</b><b style="left:347px;">00</b><b style="left:407px;">00</b><b style="left:425px;">0000</b><b style="left:491px;">00</b><b style="left:511px;">00</b><b style="left:551px;">00</b><b style="left:569px;">0000</b></div>
<div class="r l" style="top:570px"><b style="left:9px;">22</b><b style="left:59px;">00</b><b style="left:119px;">00</b><b style="left:137px;">0000</b><b style="left:203px;">00</b><b style="left:263px;">00</b><b style="left:281px;">0000</b><b style="left:347px;">00</b><b style="left:407px;">00</b><b style="left:425px;">0000</b><b style="left:491px;">00</b><b style="left:511px;">40</b><b style="left:551px;">00</b><b style="left:569px;">0000</b></div>
<div class="r l" style="top:582px"><b style="left:9px;">23</b><b style="left:59px;">00</b><b style="left:119px;">00</b><b style="left:137px;">0000</b><b style="left:203px;">00</b><b style="left:223px;">00</b><b style="left:263px;">00</b><b style="left:281px;">0000</b><b style="left:347px;">00</b><b style="left:407px;">00</b><b style="left:425px;">0000</b><b style="left:491px;">00</b><b style="left:511px;">00</b><b style="left:551px;">00</b><b style="left:569px;">0000</b><b style="left:635px;">00</b><b style="left:695px;">00</b><b style="left:713px;">0000</b><b style="left:779px;">00</b><b style="left:839px;">00</b><b style="left:857px;">0000</b></div>
<div class="r l" style="top:594px"><b style="left:9px;">24</b><em style="left:31px;color:#5a9a84">G-</em><b style="left:47px;color:#5a9a84">4</b><b style="left:59px;color:#5a9a84">01</b><b style="left:119px;">00</b><b style="left:137px;">0000</b><em style="left:175px;color:#5a9a84">G-</em><b style="left:191px;color:#5a9a84">6</b><b style="left:203px;color:#5a9a84">01</b><b style="left:263px;">00</b><b style="left:281px;">0000</b><b style="left:347px;">00</b><b style="left:407px;">00</b><b style="left:425px;">0000</b><em style="left:463px;color:#5a9a84">G-</em><b style="left:479px;color:#5a9a84">3</b><b style="left:491px;color:#5a9a84">01</b><b style="left:511px;">40</b><b style="left:551px;">00</b><b style="left:569px;">0000</b><b style="left:635px;">00</b><b style="left:695px;">00</b><b style="left:713px;">0000</b><b style="left:779px;">00</b><b style="left:839px;">00</b><b style="left:857px;">0000</b></div>
<div class="r l" style="top:606px"><b style="left:9px;">25</b><span class="q" style="left:32px;border-color:#5a9a84"></span><b style="left:59px;">00</b><b style="left:119px;">00</b><b style="left:137px;">0000</b><span class="q" style="left:176px;border-color:#5a9a84"></span><b style="left:203px;">00</b><b style="left:223px;">00</b><b style="left:263px;">00</b><b style="left:281px;">0000</b><b style="left:347px;">00</b><b style="left:407px;">00</b><b style="left:425px;">0000</b><b style="left:491px;">00</b><b style="left:511px;">00</b><b style="left:551px;">00</b><b style="left:569px;">0000</b><b style="left:635px;">00</b><b style="left:695px;">00</b><b style="left:713px;">0000</b><b style="left:779px;">00</b><b style="left:839px;">00</b><b style="left:857px;">0000</b></div>
<div class="r l" style="top:618px"><b style="left:9px;">26</b><b style="left:59px;">00</b><b style="left:119px;">00</b><b style="left:137px;">0000</b><b style="left:203px;">00</b><b style="left:263px;">00</b><b style="left:281px;">0000</b><b style="left:347px;">00</b><b style="left:407px;">00</b><b style="left:425px;">0000</b><b style="left:491px;">00</b><b style="left:511px;">40</b><b style="left:551px;">00</b><b style="left:569px;">0000</b><b style="left:635px;">00</b><b style="left:695px;">00</b><b style="left:713px;">0000</b><b style="left:779px;">00</b><b style="left:839px;">00</b><b style="left:857px;">0000</b></div>
<div class="r l" style="top:630px"><b style="left:9px;">27</b><b style="left:59px;">00</b><b style="left:119px;">00</b><b style="left:137px;">0000</b><b style="left:203px;">00</b><b style="left:223px;">00</b><b style="left:263px;">00</b><b style="left:281px;">0000</b><b style="left:347px;">00</b><b style="left:407px;">00</b><b style="left:425px;">0000</b><b style="left:491px;">00</b><b style="left:511px;">00</b><b style="left:551px;">00</b><b style="left:569px;">0000</b><b style="left:635px;">00</b><b style="left:695px;">00</b><b style="left:713px;">0000</b><b style="left:779px;">00</b><b style="left:839px;">00</b><b style="left:857px;">0000</b></div>
<div class="r l y" style="top:642px"><b style="left:9px;">28</b><i style="left:31px;width:23px"></i><b style="left:59px;">00</b><i style="left:79px;width:36px"></i><b style="left:119px;">00</b><b style="left:137px;">0000</b><i style="left:175px;width:23px"></i><b style="left:203px;">00</b><i style="left:223px;width:36px"></i><b style="left:263px;">00</b><b style="left:281px;">0000</b><i style="left:319px;width:23px"></i><b style="left:347px;">00</b><i style="left:367px;width:36px"></i><b style="left:407px;">00</b><b style="left:425px;">0000</b><i style="left:463px;width:23px"></i><b style="left:491px;">00</b><b style="left:511px;">40</b><i style="left:531px;width:16px"></i><b style="left:551px;">00</b><b style="left:569px;">0000</b><i style="left:607px;width:23px"></i><b style="left:635px;">00</b><i style="left:655px;width:36px"></i><b style="left:695px;">00</b><b style="left:713px;">0000</b><i style="left:751px;width:23px"></i><b style="left:779px;">00</b><i style="left:799px;width:36px"></i><b style="left:839px;">00</b><b style="left:857px;">0000</b></div>
<div class="r l" style="top:654px"><b style="left:9px;">29</b><b style="left:59px;">00</b><b style="left:119px;">00</b><b style="left:137px;">0000</b><b style="left:203px;">00</b><b style="left:223px;">00</b><b style="left:263px;">00</b><b style="left:281px;">0000</b><b style="left:347px;">00</b><b style="left:407px;">00</b><b style="left:425px;">0000</b><b style="left:491px;">00</b><b style="left:511px;">00</b><b style="left:551px;">00</b><b style="left:569px;">0000</b><b style="left:635px;">00</b><b style="left:695px;">00</b><b style="left:713px;">0000</b><b style="left:779px;">00</b><b style="left:839px;">00</b><b style="left:857px;">0000</b></div>
</div>
<div style="left:610px;top:271px;width:277px;height:309px;background:#809bb7;border:1px solid;border-color:#c9d6e4 #22304c #22304c #c9d6e4"></div>
<div style="left:613px;top:274px;width:271px;height:14px;background:#4c5c84"></div>
<div class="t" style="left:616px;top:273.4px;font-size:12px;color:#e8eef6;letter-spacing:-0.49px;">Track Effects</div>
<div class="rz" style="left:870px;top:276px;width:13px;height:11px;"></div>
<svg style="left:870px;top:276px" width="13" height="11" viewBox="0 0 13 11"><path d="M3.5 2.5L9 8M9 2.5L3.5 8" stroke="#000" stroke-width="1.6"/></svg>
<div class="t" style="left:622px;top:294.2px;font-size:12px;color:#0c1626;letter-spacing:-0.48px;">Track:</div>
<div class="t" style="left:622px;top:324.2px;font-size:12px;color:#0c1626;letter-spacing:-0.54px;">Effect:</div>
<div class="in" style="left:662px;top:294px;width:60px;height:19px;"></div>
<div class="rz" style="left:708px;top:296px;width:12px;height:15px;"><i class="ad g"></i></div>
<div class="t" style="left:666px;top:296.2px;font-size:12px;color:#000;font-weight:bold;">0</div>
<div class="rz" style="left:729px;top:294px;width:23px;height:19px;"><i class="al"></i></div>
<div class="rz" style="left:752px;top:294px;width:24px;height:19px;"><i class="ar"></i></div>
<div class="in" style="left:785px;top:297px;width:12px;height:12px;"></div>
<svg style="left:787px;top:299px" width="8" height="8" viewBox="0 0 8 8"><path d="M1 3.5L3 5.8L7 1.2" fill="none" stroke="#000" stroke-width="1.8"/></svg>
<div class="t" style="left:804px;top:294.7px;font-size:12px;color:#0c1626;letter-spacing:-0.61px;">Effect enabled</div>
<div class="in" style="left:662px;top:322px;width:133px;height:19px;"></div>
<div class="rz" style="left:781px;top:324px;width:12px;height:15px;"><i class="ad g"></i></div>
<div class="t" style="left:666px;top:324.2px;font-size:12px;color:#000;letter-spacing:-0.53px;">2 Stereo Delay</div>
<div class="rz" style="left:804px;top:320px;width:77px;height:21px;"></div>
<div class="t" style="left:815px;top:323.2px;font-size:12px;color:#0c1626;letter-spacing:-0.67px;">Automation</div>
<div class="t" style="left:626px;top:364.2px;font-size:12px;color:#0c1626;letter-spacing:-0.62px;">Delay :</div>
<div style="left:700px;top:370px;width:65px;height:2px;background:#22304c"></div>
<div style="left:700px;top:372px;width:65px;height:1px;background:#a8bace"></div>
<svg style="left:714px;top:363px" width="10" height="19" viewBox="0 0 10 19"><path d="M.5 .5H9.5V13L5 18.5L.5 13Z" fill="#8ba5c0"/><path d="M.5 13V.5H9.5" fill="none" stroke="#d3deea"/><path d="M9.5 .5V13L5 18.5L.5 13" fill="none" stroke="#22304c"/></svg>
<div class="in" style="left:773px;top:363px;width:39px;height:19px;"></div>
<div class="t" style="left:777px;top:365.2px;font-size:12px;color:#000;">8</div>
<div class="t" style="left:626px;top:388.2px;font-size:12px;color:#0c1626;letter-spacing:-0.53px;">Depth :</div>
<div style="left:700px;top:394px;width:65px;height:2px;background:#22304c"></div>
<div style="left:700px;top:396px;width:65px;height:1px;background:#a8bace"></div>
<svg style="left:729px;top:387px" width="10" height="19" viewBox="0 0 10 19"><path d="M.5 .5H9.5V13L5 18.5L.5 13Z" fill="#8ba5c0"/><path d="M.5 13V.5H9.5" fill="none" stroke="#d3deea"/><path d="M9.5 .5V13L5 18.5L.5 13" fill="none" stroke="#22304c"/></svg>
<div class="in" style="left:773px;top:387px;width:39px;height:19px;"></div>
<div class="t" style="left:777px;top:389.2px;font-size:12px;color:#000;">64</div>
<div class="t" style="left:626px;top:412.2px;font-size:12px;color:#0c1626;letter-spacing:-0.64px;">Feedback :</div>
<div style="left:700px;top:418px;width:65px;height:2px;background:#22304c"></div>
<div style="left:700px;top:420px;width:65px;height:1px;background:#a8bace"></div>
<svg style="left:740px;top:411px" width="10" height="19" viewBox="0 0 10 19"><path d="M.5 .5H9.5V13L5 18.5L.5 13Z" fill="#8ba5c0"/><path d="M.5 13V.5H9.5" fill="none" stroke="#d3deea"/><path d="M9.5 .5V13L5 18.5L.5 13" fill="none" stroke="#22304c"/></svg>
<div class="in" style="left:773px;top:411px;width:39px;height:19px;"></div>
<div class="t" style="left:777px;top:413.2px;font-size:12px;color:#000;">90</div>
<div class="in" style="left:817px;top:363px;width:54px;height:19px;"></div>
<div class="rz" style="left:857px;top:365px;width:12px;height:15px;"><i class="ad g"></i></div>
<div class="t" style="left:821px;top:365.2px;font-size:12px;color:#000;letter-spacing:-0.34px;">lines</div>
<div class="t" style="left:626px;top:434.2px;font-size:12px;color:#0c1626;letter-spacing:-1.00px;">LFO :</div>
<div style="left:656px;top:444px;width:215px;height:1px;background:#566c8c"></div>
<div style="left:656px;top:445px;width:215px;height:1px;background:#a8bace"></div>
<div class="t" style="left:626px;top:452.2px;font-size:12px;color:#0c1626;letter-spacing:-0.48px;">Wave :</div>
<div class="in" style="left:697px;top:452px;width:114px;height:20px;"></div>
<div class="rz" style="left:797px;top:454px;width:12px;height:16px;"><i class="ad g"></i></div>
<div class="t" style="left:736px;top:454.7px;font-size:12px;color:#000;letter-spacing:-0.50px;">Sine</div>
<svg style="left:702px;top:455px" width="28" height="13" viewBox="0 0 28 13"><path d="M1 9C5 15 9 12 13 6S22 0 27 4" fill="none" stroke="#000" stroke-width="1.5"/></svg>
<div class="t" style="left:626px;top:476.2px;font-size:12px;color:#0c1626;letter-spacing:-0.54px;">Period :</div>
<div style="left:700px;top:482px;width:65px;height:2px;background:#22304c"></div>
<div style="left:700px;top:484px;width:65px;height:1px;background:#a8bace"></div>
<svg style="left:705px;top:475px" width="10" height="19" viewBox="0 0 10 19"><path d="M.5 .5H9.5V13L5 18.5L.5 13Z" fill="#8ba5c0"/><path d="M.5 13V.5H9.5" fill="none" stroke="#d3deea"/><path d="M9.5 .5V13L5 18.5L.5 13" fill="none" stroke="#22304c"/></svg>
<div class="in" style="left:773px;top:476px;width:39px;height:19px;"></div>
<div class="t" style="left:777px;top:478.2px;font-size:12px;color:#000;">96</div>
<div class="t" style="left:626px;top:500.7px;font-size:12px;color:#0c1626;letter-spacing:-0.64px;">Amplitude :</div>
<div style="left:700px;top:506px;width:65px;height:2px;background:#22304c"></div>
<div style="left:700px;top:508px;width:65px;height:1px;background:#a8bace"></div>
<svg style="left:714px;top:499px" width="10" height="19" viewBox="0 0 10 19"><path d="M.5 .5H9.5V13L5 18.5L.5 13Z" fill="#8ba5c0"/><path d="M.5 13V.5H9.5" fill="none" stroke="#d3deea"/><path d="M9.5 .5V13L5 18.5L.5 13" fill="none" stroke="#22304c"/></svg>
<div class="in" style="left:773px;top:500px;width:39px;height:19px;"></div>
<div class="t" style="left:777px;top:502.2px;font-size:12px;color:#000;">32</div>
<div style="left:5px;top:675px;width:17px;height:18px;border-right:2px solid #22304c;border-bottom:2px solid #22304c"></div>
<div style="left:29px;top:675px;width:47px;height:18px;border:1px solid;border-color:#22304c #c9d6e4 #c9d6e4 #22304c;box-shadow:inset 1px 1px 0 #566c8c"></div>
<div class="t" style="left:39px;top:676.7px;font-size:12px;color:#0c1626;letter-spacing:-0.78px;">Follow</div>
<div class="trk" style="left:80px;top:675px;width:939px;height:16px;"></div>
<div class="rz" style="left:80px;top:675px;width:13px;height:16px;"><i class="al s"></i></div>
<div class="rz" style="left:93px;top:675px;width:13px;height:16px;"></div>
<div class="rz" style="left:1005px;top:675px;width:13px;height:16px;"><i class="ar s"></i></div>
<div style="left:80px;top:691px;width:943px;height:6px;background:#7b96b2"></div>
<div style="left:0px;top:697px;width:1023px;height:1px;background:#4f6786"></div>
<div style="left:0px;top:699px;width:1023px;height:1px;background:#9bb2ca"></div>
<div style="left:250px;top:698px;width:1px;height:15px;background:#b9cadb"></div>
<div style="left:252px;top:698px;width:1px;height:15px;background:#3f5676"></div>
<div style="left:254px;top:699px;width:1px;height:14px;background:#9bb2ca"></div>
<div style="left:329px;top:698px;width:1px;height:15px;background:#b9cadb"></div>
<div style="left:331px;top:698px;width:1px;height:15px;background:#3f5676"></div>
<div style="left:333px;top:699px;width:1px;height:14px;background:#9bb2ca"></div>
<div style="left:394px;top:698px;width:1px;height:15px;background:#b9cadb"></div>
<div style="left:396px;top:698px;width:1px;height:15px;background:#3f5676"></div>
<div style="left:398px;top:699px;width:1px;height:14px;background:#9bb2ca"></div>
<div class="t" style="left:3px;top:698.2px;font-size:12px;color:#0c1626;letter-spacing:-0.74px;">Ready</div>
<div class="t" style="left:255px;top:698.2px;font-size:12px;color:#0c1626;letter-spacing:-0.55px;">Octave: 3-4</div>
<div class="t" style="left:336px;top:698.2px;font-size:12px;color:#0c1626;letter-spacing:-0.78px;">Add: 1</div>
<div style="left:0px;top:713px;width:1023px;height:2px;background:#eef2f6"></div>
</body></html>
